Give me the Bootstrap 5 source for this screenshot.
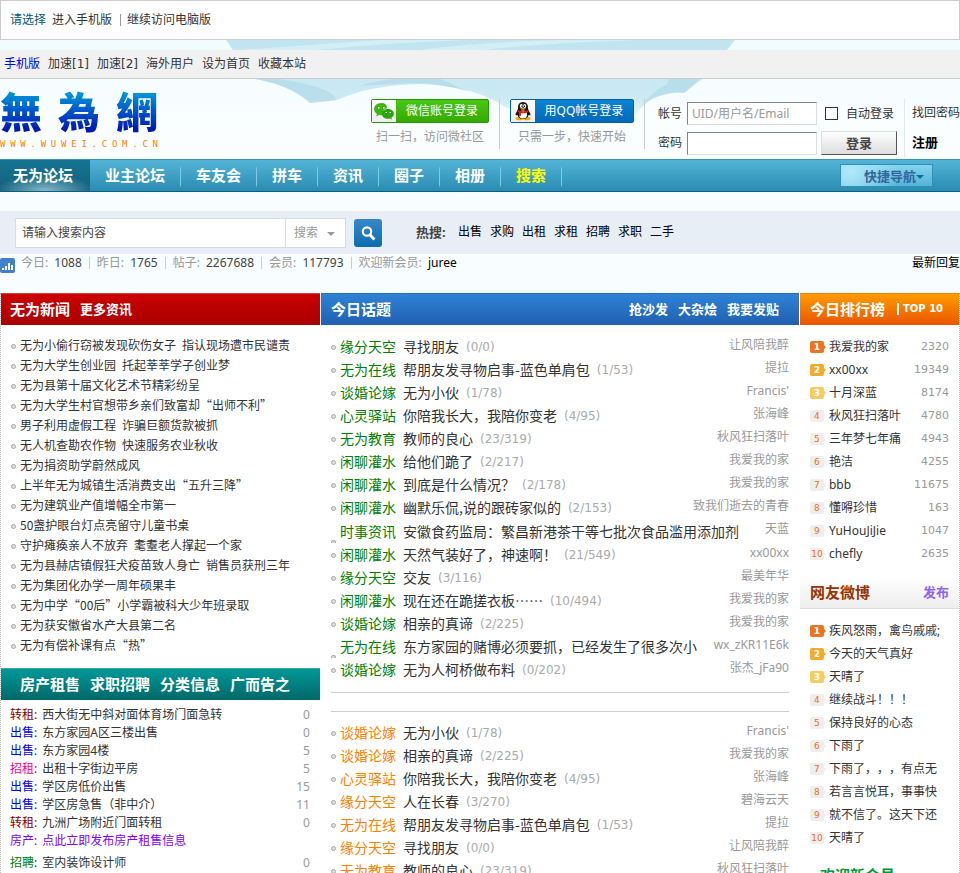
<!DOCTYPE html>
<html lang="zh-CN">
<head>
<meta charset="utf-8">
<meta name="viewport" content="width=device-width, initial-scale=1">
<title>无为论坛</title>
<link rel="stylesheet" href="https://cdn.jsdelivr.net/npm/bootstrap@5.3.0/dist/css/bootstrap.min.css">
<style>
body{font:12px/20px "Noto Sans","Noto Sans CJK SC",sans-serif;color:#333;background:#f8fdff;text-spacing-trim:space-all}
a{color:inherit;text-decoration:none}
.cjk{font-family:"Noto Sans CJK SC",sans-serif}
.topbar{height:40px;border:1px solid #ccc;padding-left:9px;gap:6px;background:#fff}
.topbar a:first-child{color:#00597a}
.topbar i{width:1px;height:12px;background:#999;margin-left:2px}
.masthead{background:linear-gradient(#f0fcff,#fafeff 70%)}
.clouds{z-index:0;top:0;left:0}
.utility{height:29px;margin-top:10px;background:#f1f1f1;border-bottom:1px solid #ccc;padding-left:4px;gap:8px;padding-bottom:1px;font-family:"DejaVu Sans","Noto Sans CJK SC",sans-serif}
.brandbar{height:80px}
.logo{width:158px;color:#0a4fc4}
.logo-main{font:900 42px/50px "Noto Sans CJK SC",sans-serif;margin-top:6px;background:linear-gradient(#0098d8 15%,#0050c8 55%,#0018b0 90%);-webkit-background-clip:text;background-clip:text;color:transparent}
.logo-url{font:9px/8px "DejaVu Sans Mono",monospace;color:#ff8000;margin-top:5px}
.v-rule{width:1px;height:50px;background:#ccc;margin:20px 10px 0}
.v-rule.tall{height:58px;background:#e0e8ec;margin:20px 7px 0}
.social{padding-top:20px}
.social small{font-size:12px;line-height:20px;color:#999;margin-top:4px}
.login-btn{height:24px;border:1px solid;border-radius:2px;color:#fff;font-size:12px;line-height:22px;padding:0}
.login-btn .pic{width:24px;height:22px;background:linear-gradient(#fff,#eee)}
.login-btn .txt{flex:1}
.wx{width:118px;border-color:#1d9b04;background:linear-gradient(#48c814,#38a800)}
.qq{width:124px;border-color:#0060a8;background:linear-gradient(#0c84d4,#0068b8)}
.field{width:130px;height:23px;border:1px solid #ddd;border-top:1px solid #848484;border-left:1px solid #848484;background:#fff;padding:0 4px;font-size:12px;color:#333}
.field::placeholder{color:#999;opacity:1}
.login-grid{display:grid;grid-template-columns:29px 130px 80px;row-gap:6px;padding:23px 0 0 3px;align-items:center;align-content:start;white-space:nowrap}
.login-grid>:nth-child(3n){margin-left:4px}
.signin{width:76px;height:24px;border:1px solid #555;border-top-color:#cde8e4;border-left-color:#cde8e4;background:linear-gradient(#fff,#ddd);font-weight:bold;font-size:13px;line-height:20px;padding:0;color:#444}
.tick{appearance:none;width:13px;height:13px;border:1px solid #333;background:#fff;margin:0}
.account b{font-size:13px;margin-top:9px}
.mainnav{height:33px;background:linear-gradient(#54b4d8,#2a8cb2);border-top:1px solid #3a92b4;border-bottom:1px solid #0c5f7e}
.mainnav .nav-link{font-size:15px;font-weight:bold;line-height:31px;color:#fff;padding:0 15px;border-right:1px solid #6cc0de;border-image:linear-gradient(transparent 20%,#7fcbe6 30%,#7fcbe6 80%,transparent 85%) 1}
.mainnav .nav-link.active{border:0;padding:0 17px 0 13px;background:radial-gradient(ellipse 50px 16px at 50% 100%,#86b9c9,transparent),linear-gradient(#167594,#125f7c)}
.mainnav .hot{color:#ff0}
.quick{width:93px;height:23px;border:1px solid #3090b4;background:radial-gradient(circle at 10% 30%,#b0e8fa,transparent 60%),linear-gradient(#84d4ee,#52b4d8);color:#369;font-weight:bold;font-size:13px;line-height:20px;padding:0 0 0 15px;margin-right:27px}
.quick::after,.pick::after{content:"";display:inline-block;border:4px solid transparent;border-top:4px solid #10708c;border-bottom:0;vertical-align:middle}
.searchband{height:43px;margin-top:19px;background:#e8eef5;padding-left:15px}
.searchbox{width:331px;height:30px;border:1px solid #cde0e8;background:#fff}
.searchbox input{border:0;width:270px;padding:0 6px;font-size:12px;color:#444;background:none}
.pick{border-left:1px solid #cde0e8;position:relative;width:60px}
.pick select{appearance:none;border:0;background:none;color:#999;padding:0 0 0 8px;width:59px;height:28px;font-size:12px}
.pick::after{position:absolute;right:10px;top:13px;border-top-color:#999;pointer-events:none}
.go{width:28px;height:28px;border:0;border-radius:3px;background:linear-gradient(#3888c8,#0c6cb0);padding:0;margin-left:8px}
.hotwords{margin-left:34px;gap:8px;color:#000;padding-bottom:2px}
.hotwords b{font-size:13px;color:#444;width:34px}
.stats{height:20px;color:#999;margin-bottom:19px;gap:6px;padding-bottom:2px}
.stats svg{margin-top:4px}
.stats b,.stats span a{font-weight:normal;color:#444;margin-left:3px}
.stats i{width:1px;height:12px;background:#ccc;margin:0 1px}
.board{background:#fff}
.left{border-left:1px dotted #bbb}
.right{border-right:1px dotted #bbb}
.head{height:32px;color:#fff;font-weight:bold;font-size:13px;padding-bottom:2px}
.head h2{font-size:15px;font-weight:bold;line-height:20px;margin:0}
.red{background:linear-gradient(#cc0000,#a80000);border-top:1px solid #d84040;padding-left:9px;gap:10px}
.teal{background:linear-gradient(#009898,#006868);border-top:1px solid #40a8a8;padding-left:19px;gap:10px;font-size:15px}
.blue{background:linear-gradient(#2e82d6,#2060b0);border-top:1px solid #2070c0;padding:0 20px 2px 10px;gap:10px}
.orange{background:linear-gradient(#ff9c00,#ea5400);border-top:1px solid #f08000;padding-left:10px}
.orange small{font:bold 10px/12px "DejaVu Sans",sans-serif;border-left:2px solid #fff;padding-left:4px;margin-left:12px}
.mid{border-left:1px solid #fff;border-right:1px solid #fff}
.dots li::before{content:"";flex:none;width:5px;height:5px;border:1px solid #aaa;border-radius:50%;background:#ddd;margin-right:4px;margin-top:2px}
.news{padding:10px 0 13px 10px}
.news li{height:20px}
.deals{padding:6px 10px 0 9px}
.deals li{height:18px;white-space:pre}
.deals a+a{margin-left:2px}
.deals .n{color:#999;margin-left:auto}
.deals li:last-child{margin-top:4px}
.maroon{color:#800000}.bl{color:#00f}.pink{color:#f08}.violet{color:#8000ff}.green{color:#008000}
.topics{padding:10px 10px 0 10px;font:14px/23px "Noto Sans CJK SC",sans-serif}
.topics li{height:23px;white-space:nowrap}
.topics li>a:first-child{color:green;margin-right:7px}
.topics .num{font:12px/22px "DejaVu Sans",sans-serif;color:#aaa;margin-left:7px}
.topics .who{font:12px/20px "Noto Sans","Noto Sans CJK SC",sans-serif;color:#999;margin-left:auto;align-self:flex-start}
.topics .tall{height:24px}
.topics .low::before{align-self:flex-end;height:3px;border-bottom:0;border-radius:3px 3px 0 0}
.topics.warm{padding-top:9px}
.topics.warm li>a:first-child{color:#ff8000}
.rules{height:20px;border-top:1px solid #ccc;border-bottom:1px solid #ccc;margin:11px 10px 0}
.rank{padding:10px 10px 0 10px}
.rank li{height:23px;white-space:nowrap}
.rank .n{margin-left:auto;color:#999;font-family:"DejaVu Sans",sans-serif;font-size:11px}
.pos{width:14px;height:12px;border-radius:2px;background:#eee;color:#e87018;font:9px/12px "DejaVu Sans",sans-serif;text-align:center;margin-right:5px;position:relative;flex:none}
.pos::after{content:"";position:absolute;left:14px;top:4px;border:2px solid transparent;border-left-color:#eee;border-right:0}
.rank li:nth-child(-n+3) .pos{color:#fff;font-weight:bold}
.rank li:nth-child(1) .pos{background:#ec7420}.rank li:nth-child(1) .pos::after{border-left-color:#ec7420}
.rank li:nth-child(2) .pos{background:#f4ac28}.rank li:nth-child(2) .pos::after{border-left-color:#f4ac28}
.rank li:nth-child(3) .pos{background:#f6cc60}.rank li:nth-child(3) .pos::after{border-left-color:#f6cc60}
.weibo{margin-top:12px;background:linear-gradient(#fff,#eee);border-bottom:1px solid #ddd;color:#963200;padding:0 10px 2px 10px}
.weibo a{color:#9060ff}
.welcome{color:#093;font-size:15px;font-weight:bold;line-height:20px;padding:16px 0 0 20px;margin:0}
</style>
<script src="https://cdn.jsdelivr.net/npm/bootstrap@5.3.0/dist/js/bootstrap.bundle.min.js"></script>
</head>
<body>
<div class="topbar d-flex align-items-center"><a href="#">请选择</a><a href="#">进入手机版</a><i></i><a href="#">继续访问电脑版</a></div>
<header class="masthead position-relative overflow-hidden">
<svg class="clouds position-absolute" width="960" height="119" viewBox="0 0 960 119" aria-hidden="true">
<defs><linearGradient id="sky" gradientUnits="userSpaceOnUse" x1="0" y1="0" x2="0" y2="84"><stop stop-color="#c0e4f0"/><stop offset=".7" stop-color="#cdeaf4"/><stop offset="1" stop-color="#f4fcff"/></linearGradient></defs>
<path d="M226 0Q236 14 250 38Q290 44 310 63L337 60Q370 45 420 44Q475 46 505 67Q570 96 636 75Q644 60 660 56Q676 51 684 53Q692 45 705 38Q722 16 735 0Z" fill="url(#sky)"/>
<path d="M255 39Q290 45 310 63L337 60Q330 45 270 38ZM360 46Q390 35 440 39L470 52Q440 43 410 43ZM640 68Q655 48 668 44Q664 34 700 38Q690 50 684 53Q660 50 640 68Z" fill="#a8d4e4" opacity=".5"/>
<path d="M240 10Q320 4 380 0H470Q350 4 270 16ZM420 10Q480 2 560 0H640Q520 4 470 12Z" fill="#dcf2f8" opacity=".7"/>
</svg>
<nav class="utility position-relative d-flex align-items-center mb-0"><a href="#" class="bl">手机版</a><a href="#">加速[1]</a><a href="#">加速[2]</a><a href="#">海外用户</a><a href="#">设为首页</a><a href="#">收藏本站</a></nav>
<div class="brandbar position-relative d-flex justify-content-between">
<a href="#" class="logo"><div class="logo-main d-flex justify-content-between"><span>無</span><span>為</span><span>網</span></div>
<div class="logo-url d-flex justify-content-between"><span>W</span><span>W</span><span>W</span><span>.</span><span>W</span><span>U</span><span>W</span><span>E</span><span>I</span><span>.</span><span>C</span><span>O</span><span>M</span><span>.</span><span>C</span><span>N</span></div></a>
<div class="d-flex">
<div class="social d-flex flex-column align-items-center"><button class="login-btn wx d-flex" type="button"><span class="pic"><svg class="d-block" width="24" height="22" viewBox="0 0 24 22"><path d="M9 3C5 3 2 6 2 9q0 3 3 5l-1 2.500 3-1.500q2 .5 4 0Q10 10 15 8 15 3 9 3Z" fill="#3db614"/><path d="M16 9c-3 0-6 2-6 5 0 4 4 5.500 8 4.500l2 1-.5-2q2.500-1.500 2.500-3.500c0-3-3-5-6-5Z" fill="#2ea40c"/><path d="M6 7h1.500v1.500H6zM11 7h1.500v1.500H11zM13.500 12H15v1h-1.500zM17.500 12H19v1h-1.500z" fill="#fff"/></svg></span><span class="txt">微信账号登录</span></button><small>扫一扫，访问微社区</small></div>
<div class="v-rule"></div>
<div class="social d-flex flex-column align-items-center"><button class="login-btn qq d-flex" type="button"><span class="pic"><svg class="d-block" width="24" height="22" viewBox="0 0 24 22"><ellipse cx="8.500" cy="18.500" rx="4" ry="1.800" fill="#f5a800"/><ellipse cx="15.500" cy="18.500" rx="4" ry="1.800" fill="#f5a800"/><path d="M12 2Q6.500 2 7 9L4.500 14q0 2 2 1 1 4 5.500 4t5.500-4q2 1 2-1L17 9Q17.500 2 12 2Z" fill="#181818"/><ellipse cx="12" cy="14.500" rx="4" ry="4" fill="#fff"/><ellipse cx="10.300" cy="6" rx="1.500" ry="2" fill="#fff"/><ellipse cx="13.700" cy="6" rx="1.500" ry="2" fill="#fff"/><path d="M10.500 5.500h1v1.500h-1zM13 5.500h1v1.500h-1z"/><path d="M9 8.500q3-1 6 0-3 2.500-6 0Z" fill="#f5a800"/><path d="M6.500 10q5.500 2.500 11 0v2q-4 2-7.500 1v3H8v-3.500l-1.500-.8Z" fill="#e02010"/></svg></span><span class="txt">用QQ帐号登录</span></button><small>只需一步，快速开始</small></div>
<div class="v-rule"></div>
<form class="login-grid">
<label for="user">帐号</label><input id="user" class="field" placeholder="UID/用户名/Email"><span class="d-flex align-items-center gap-2 ps-1"><input type="checkbox" class="tick" id="auto"><label for="auto">自动登录</label></span>
<label for="pass">密码</label><input id="pass" class="field" type="password"><button class="signin" type="button">登录</button>
</form>
<div class="v-rule tall"></div>
<div class="account d-flex flex-column pt-4 text-nowrap"><a href="#">找回密码</a><b><a href="#" class="text-black">注册</a></b></div>
</div>
</div>
</header>
<nav class="mainnav d-flex align-items-center justify-content-between"><div class="nav flex-nowrap"><a class="nav-link active" href="#">无为论坛</a><a class="nav-link" href="#">业主论坛</a><a class="nav-link" href="#">车友会</a><a class="nav-link" href="#">拼车</a><a class="nav-link" href="#">资讯</a><a class="nav-link" href="#">圈子</a><a class="nav-link" href="#">相册</a><a class="nav-link hot" href="#">搜索</a></div><button class="quick" type="button">快捷导航</button></nav>
<section class="searchband d-flex align-items-center">
<form class="d-flex align-items-center"><div class="searchbox d-flex"><input value="请输入搜索内容" aria-label="请输入搜索内容"><div class="pick"><select aria-label="搜索"><option>搜索</option></select></div></div><button class="go" type="button" aria-label="搜索"><svg width="28" height="28" viewBox="0 0 28 28" fill="none" stroke="#fff"><circle cx="13" cy="12.500" r="4.200" stroke-width="2.200"/><path d="M16 16l4.500 4.500" stroke-width="3"/></svg></button></form>
<div class="hotwords d-flex align-items-center"><b>热搜:</b><a href="#">出售</a><a href="#">求购</a><a href="#">出租</a><a href="#">求租</a><a href="#">招聘</a><a href="#">求职</a><a href="#">二手</a></div>
</section>
<section class="stats d-flex align-items-center">
<svg width="15" height="15" viewBox="0 0 15 15" aria-hidden="true"><rect width="15" height="15" rx="2" fill="#4080cc"/><path d="M2 10h2v2H2zM5 8h2v4H5zM8 5h2v7H8zM11 7h2v5h-2z" fill="#fff"/></svg>
<span>今日: <b>1088</b></span><i></i><span>昨日: <b>1765</b></span><i></i><span>帖子: <b>2267688</b></span><i></i><span>会员: <b>117793</b></span><i></i><span>欢迎新会员: <a href="#" class="text-black">juree</a></span><a href="#" class="ms-auto text-black">最新回复</a>
</section>
<main class="board row g-0">
<div class="col-4 left">
<div class="head red d-flex align-items-center"><h2>无为新闻</h2><a href="#">更多资讯</a></div>
<ul class="news dots cjk list-unstyled mb-0">
<li class="d-flex align-items-center"><a href="#">无为小偷行窃被发现砍伤女子&ensp;指认现场遭市民谴责</a></li>
<li class="d-flex align-items-center"><a href="#">无为大学生创业园&ensp;托起莘莘学子创业梦</a></li>
<li class="d-flex align-items-center"><a href="#">无为县第十届文化艺术节精彩纷呈</a></li>
<li class="d-flex align-items-center"><a href="#">无为大学生村官想带乡亲们致富却“出师不利”</a></li>
<li class="d-flex align-items-center"><a href="#">男子利用虚假工程&ensp;诈骗巨额货款被抓</a></li>
<li class="d-flex align-items-center"><a href="#">无人机查勘农作物&ensp;快速服务农业秋收</a></li>
<li class="d-flex align-items-center"><a href="#">无为捐资助学蔚然成风</a></li>
<li class="d-flex align-items-center"><a href="#">上半年无为城镇生活消费支出“五升三降”</a></li>
<li class="d-flex align-items-center"><a href="#">无为建筑业产值增幅全市第一</a></li>
<li class="d-flex align-items-center"><a href="#">50盏护眼台灯点亮留守儿童书桌</a></li>
<li class="d-flex align-items-center"><a href="#">守护瘫痪亲人不放弃&ensp;耄耋老人撑起一个家</a></li>
<li class="d-flex align-items-center"><a href="#">无为县赫店镇假狂犬疫苗致人身亡&ensp;销售员获刑三年</a></li>
<li class="d-flex align-items-center"><a href="#">无为集团化办学一周年硕果丰</a></li>
<li class="d-flex align-items-center"><a href="#">无为中学“00后”小学霸被科大少年班录取</a></li>
<li class="d-flex align-items-center"><a href="#">无为获安徽省水产大县第二名</a></li>
<li class="d-flex align-items-center"><a href="#">无为有偿补课有点“热”</a></li>
</ul>
<div class="head teal d-flex align-items-center"><a href="#">房产租售</a><a href="#">求职招聘</a><a href="#">分类信息</a><a href="#">广而告之</a></div>
<ul class="deals list-unstyled mb-0">
<li class="d-flex align-items-center"><a href="#" class="maroon">转租</a>: <a href="#">西大街无中斜对面体育场门面急转</a><span class="n">0</span></li>
<li class="d-flex align-items-center"><a href="#" class="bl">出售</a>: <a href="#">东方家园A区三楼出售</a><span class="n">0</span></li>
<li class="d-flex align-items-center"><a href="#" class="bl">出售</a>: <a href="#">东方家园4楼</a><span class="n">5</span></li>
<li class="d-flex align-items-center"><a href="#" class="pink">招租</a>: <a href="#">出租十字街边平房</a><span class="n">5</span></li>
<li class="d-flex align-items-center"><a href="#" class="bl">出售</a>: <a href="#">学区房低价出售</a><span class="n">15</span></li>
<li class="d-flex align-items-center"><a href="#" class="bl">出售</a>: <a href="#">学区房急售（非中介）</a><span class="n">11</span></li>
<li class="d-flex align-items-center"><a href="#" class="maroon">转租</a>: <a href="#">九洲广场附近门面转租</a><span class="n">0</span></li>
<li class="d-flex align-items-center violet"><a href="#">房产</a>: <a href="#">点此立即发布房产租售信息</a></li>
<li class="d-flex align-items-center"><a href="#" class="green">招聘</a>: <a href="#">室内装饰设计师</a><span class="n">0</span></li>
</ul>
</div>
<div class="col-6 mid">
<div class="head blue d-flex align-items-center"><h2 class="me-auto">今日话题</h2><a href="#">抢沙发</a><a href="#">大杂烩</a><a href="#">我要发贴</a></div>
<ul class="topics dots list-unstyled mb-0">
<li class="d-flex align-items-center"><a href="#">缘分天空</a><a href="#">寻找朋友</a><span class="num">(0/0)</span><span class="who">让风陪我醉</span></li>
<li class="d-flex align-items-center"><a href="#">无为在线</a><a href="#">帮朋友发寻物启事-蓝色单肩包</a><span class="num">(1/53)</span><span class="who">提拉</span></li>
<li class="d-flex align-items-center"><a href="#">谈婚论嫁</a><a href="#">无为小伙</a><span class="num">(1/78)</span><span class="who">Francis'</span></li>
<li class="d-flex align-items-center"><a href="#">心灵驿站</a><a href="#">你陪我长大，我陪你变老</a><span class="num">(4/95)</span><span class="who">张海峰</span></li>
<li class="d-flex align-items-center"><a href="#">无为教育</a><a href="#">教师的良心</a><span class="num">(23/319)</span><span class="who">秋风狂扫落叶</span></li>
<li class="d-flex align-items-center"><a href="#">闲聊灌水</a><a href="#">给他们跪了</a><span class="num">(2/217)</span><span class="who">我爱我的家</span></li>
<li class="d-flex align-items-center"><a href="#">闲聊灌水</a><a href="#">到底是什么情况？</a><span class="num">(2/178)</span><span class="who">我爱我的家</span></li>
<li class="d-flex align-items-center"><a href="#">闲聊灌水</a><a href="#">幽默乐侃,说的跟砖家似的</a><span class="num">(2/153)</span><span class="who">致我们逝去的青春</span></li>
<li class="d-flex align-items-center tall low"><a href="#">时事资讯</a><a href="#">安徽食药监局：繁昌新港茶干等七批次食品滥用添加剂</a><span class="who">天蓝</span></li>
<li class="d-flex align-items-center"><a href="#">闲聊灌水</a><a href="#">天然气装好了，神速啊！</a><span class="num">(21/549)</span><span class="who">xx00xx</span></li>
<li class="d-flex align-items-center"><a href="#">缘分天空</a><a href="#">交友</a><span class="num">(3/116)</span><span class="who">最美年华</span></li>
<li class="d-flex align-items-center"><a href="#">闲聊灌水</a><a href="#">现在还在跪搓衣板……</a><span class="num">(10/494)</span><span class="who">我爱我的家</span></li>
<li class="d-flex align-items-center"><a href="#">谈婚论嫁</a><a href="#">相亲的真谛</a><span class="num">(2/225)</span><span class="who">我爱我的家</span></li>
<li class="d-flex align-items-center low"><a href="#">无为在线</a><a href="#">东方家园的赌博必须要抓，已经发生了很多次小</a><span class="who">wx_zKR11E6k</span></li>
<li class="d-flex align-items-center"><a href="#">谈婚论嫁</a><a href="#">无为人柯桥做布料</a><span class="num">(0/202)</span><span class="who">张杰_jFa90</span></li>
</ul>
<div class="rules"></div>
<ul class="topics warm dots list-unstyled mb-0">
<li class="d-flex align-items-center"><a href="#">谈婚论嫁</a><a href="#">无为小伙</a><span class="num">(1/78)</span><span class="who">Francis'</span></li>
<li class="d-flex align-items-center"><a href="#">谈婚论嫁</a><a href="#">相亲的真谛</a><span class="num">(2/225)</span><span class="who">我爱我的家</span></li>
<li class="d-flex align-items-center"><a href="#">心灵驿站</a><a href="#">你陪我长大，我陪你变老</a><span class="num">(4/95)</span><span class="who">张海峰</span></li>
<li class="d-flex align-items-center"><a href="#">缘分天空</a><a href="#">人在长春</a><span class="num">(3/270)</span><span class="who">碧海云天</span></li>
<li class="d-flex align-items-center"><a href="#">无为在线</a><a href="#">帮朋友发寻物启事-蓝色单肩包</a><span class="num">(1/53)</span><span class="who">提拉</span></li>
<li class="d-flex align-items-center"><a href="#">缘分天空</a><a href="#">寻找朋友</a><span class="num">(0/0)</span><span class="who">让风陪我醉</span></li>
<li class="d-flex align-items-center"><a href="#">无为教育</a><a href="#">教师的良心</a><span class="num">(23/319)</span><span class="who">秋风狂扫落叶</span></li>
</ul>
</div>
<div class="col-2 right">
<div class="head orange d-flex align-items-center"><h2>今日排行榜</h2><small>TOP 10</small></div>
<ol class="rank list-unstyled mb-0">
<li class="d-flex align-items-center"><span class="pos">1</span><a href="#">我爱我的家</a><span class="n">2320</span></li>
<li class="d-flex align-items-center"><span class="pos">2</span><a href="#">xx00xx</a><span class="n">19349</span></li>
<li class="d-flex align-items-center"><span class="pos">3</span><a href="#">十月深蓝</a><span class="n">8174</span></li>
<li class="d-flex align-items-center"><span class="pos">4</span><a href="#">秋风狂扫落叶</a><span class="n">4780</span></li>
<li class="d-flex align-items-center"><span class="pos">5</span><a href="#">三年梦七年痛</a><span class="n">4943</span></li>
<li class="d-flex align-items-center"><span class="pos">6</span><a href="#">艳洁</a><span class="n">4255</span></li>
<li class="d-flex align-items-center"><span class="pos">7</span><a href="#">bbb</a><span class="n">11675</span></li>
<li class="d-flex align-items-center"><span class="pos">8</span><a href="#">懂嘚珍惜</a><span class="n">163</span></li>
<li class="d-flex align-items-center"><span class="pos">9</span><a href="#">YuHouJiJie</a><span class="n">1047</span></li>
<li class="d-flex align-items-center"><span class="pos">10</span><a href="#">chefly</a><span class="n">2635</span></li>
</ol>
<div class="head weibo d-flex align-items-center justify-content-between"><h2>网友微博</h2><a href="#">发布</a></div>
<ol class="rank list-unstyled mb-0">
<li class="d-flex align-items-center"><span class="pos">1</span><a href="#">疾风怒雨，禽鸟戚戚;</a></li>
<li class="d-flex align-items-center"><span class="pos">2</span><a href="#">今天的天气真好</a></li>
<li class="d-flex align-items-center"><span class="pos">3</span><a href="#">天晴了</a></li>
<li class="d-flex align-items-center"><span class="pos">4</span><a href="#">继续战斗！！！</a></li>
<li class="d-flex align-items-center"><span class="pos">5</span><a href="#">保持良好的心态</a></li>
<li class="d-flex align-items-center"><span class="pos">6</span><a href="#">下雨了</a></li>
<li class="d-flex align-items-center"><span class="pos">7</span><a href="#">下雨了，，，有点无</a></li>
<li class="d-flex align-items-center"><span class="pos">8</span><a href="#">若言言悦耳，事事快</a></li>
<li class="d-flex align-items-center"><span class="pos">9</span><a href="#">就不信了。这天下还</a></li>
<li class="d-flex align-items-center"><span class="pos">10</span><a href="#">天晴了</a></li>
</ol>
<h2 class="welcome">欢迎新会员</h2>
</div>
</main>
</body>
</html>
